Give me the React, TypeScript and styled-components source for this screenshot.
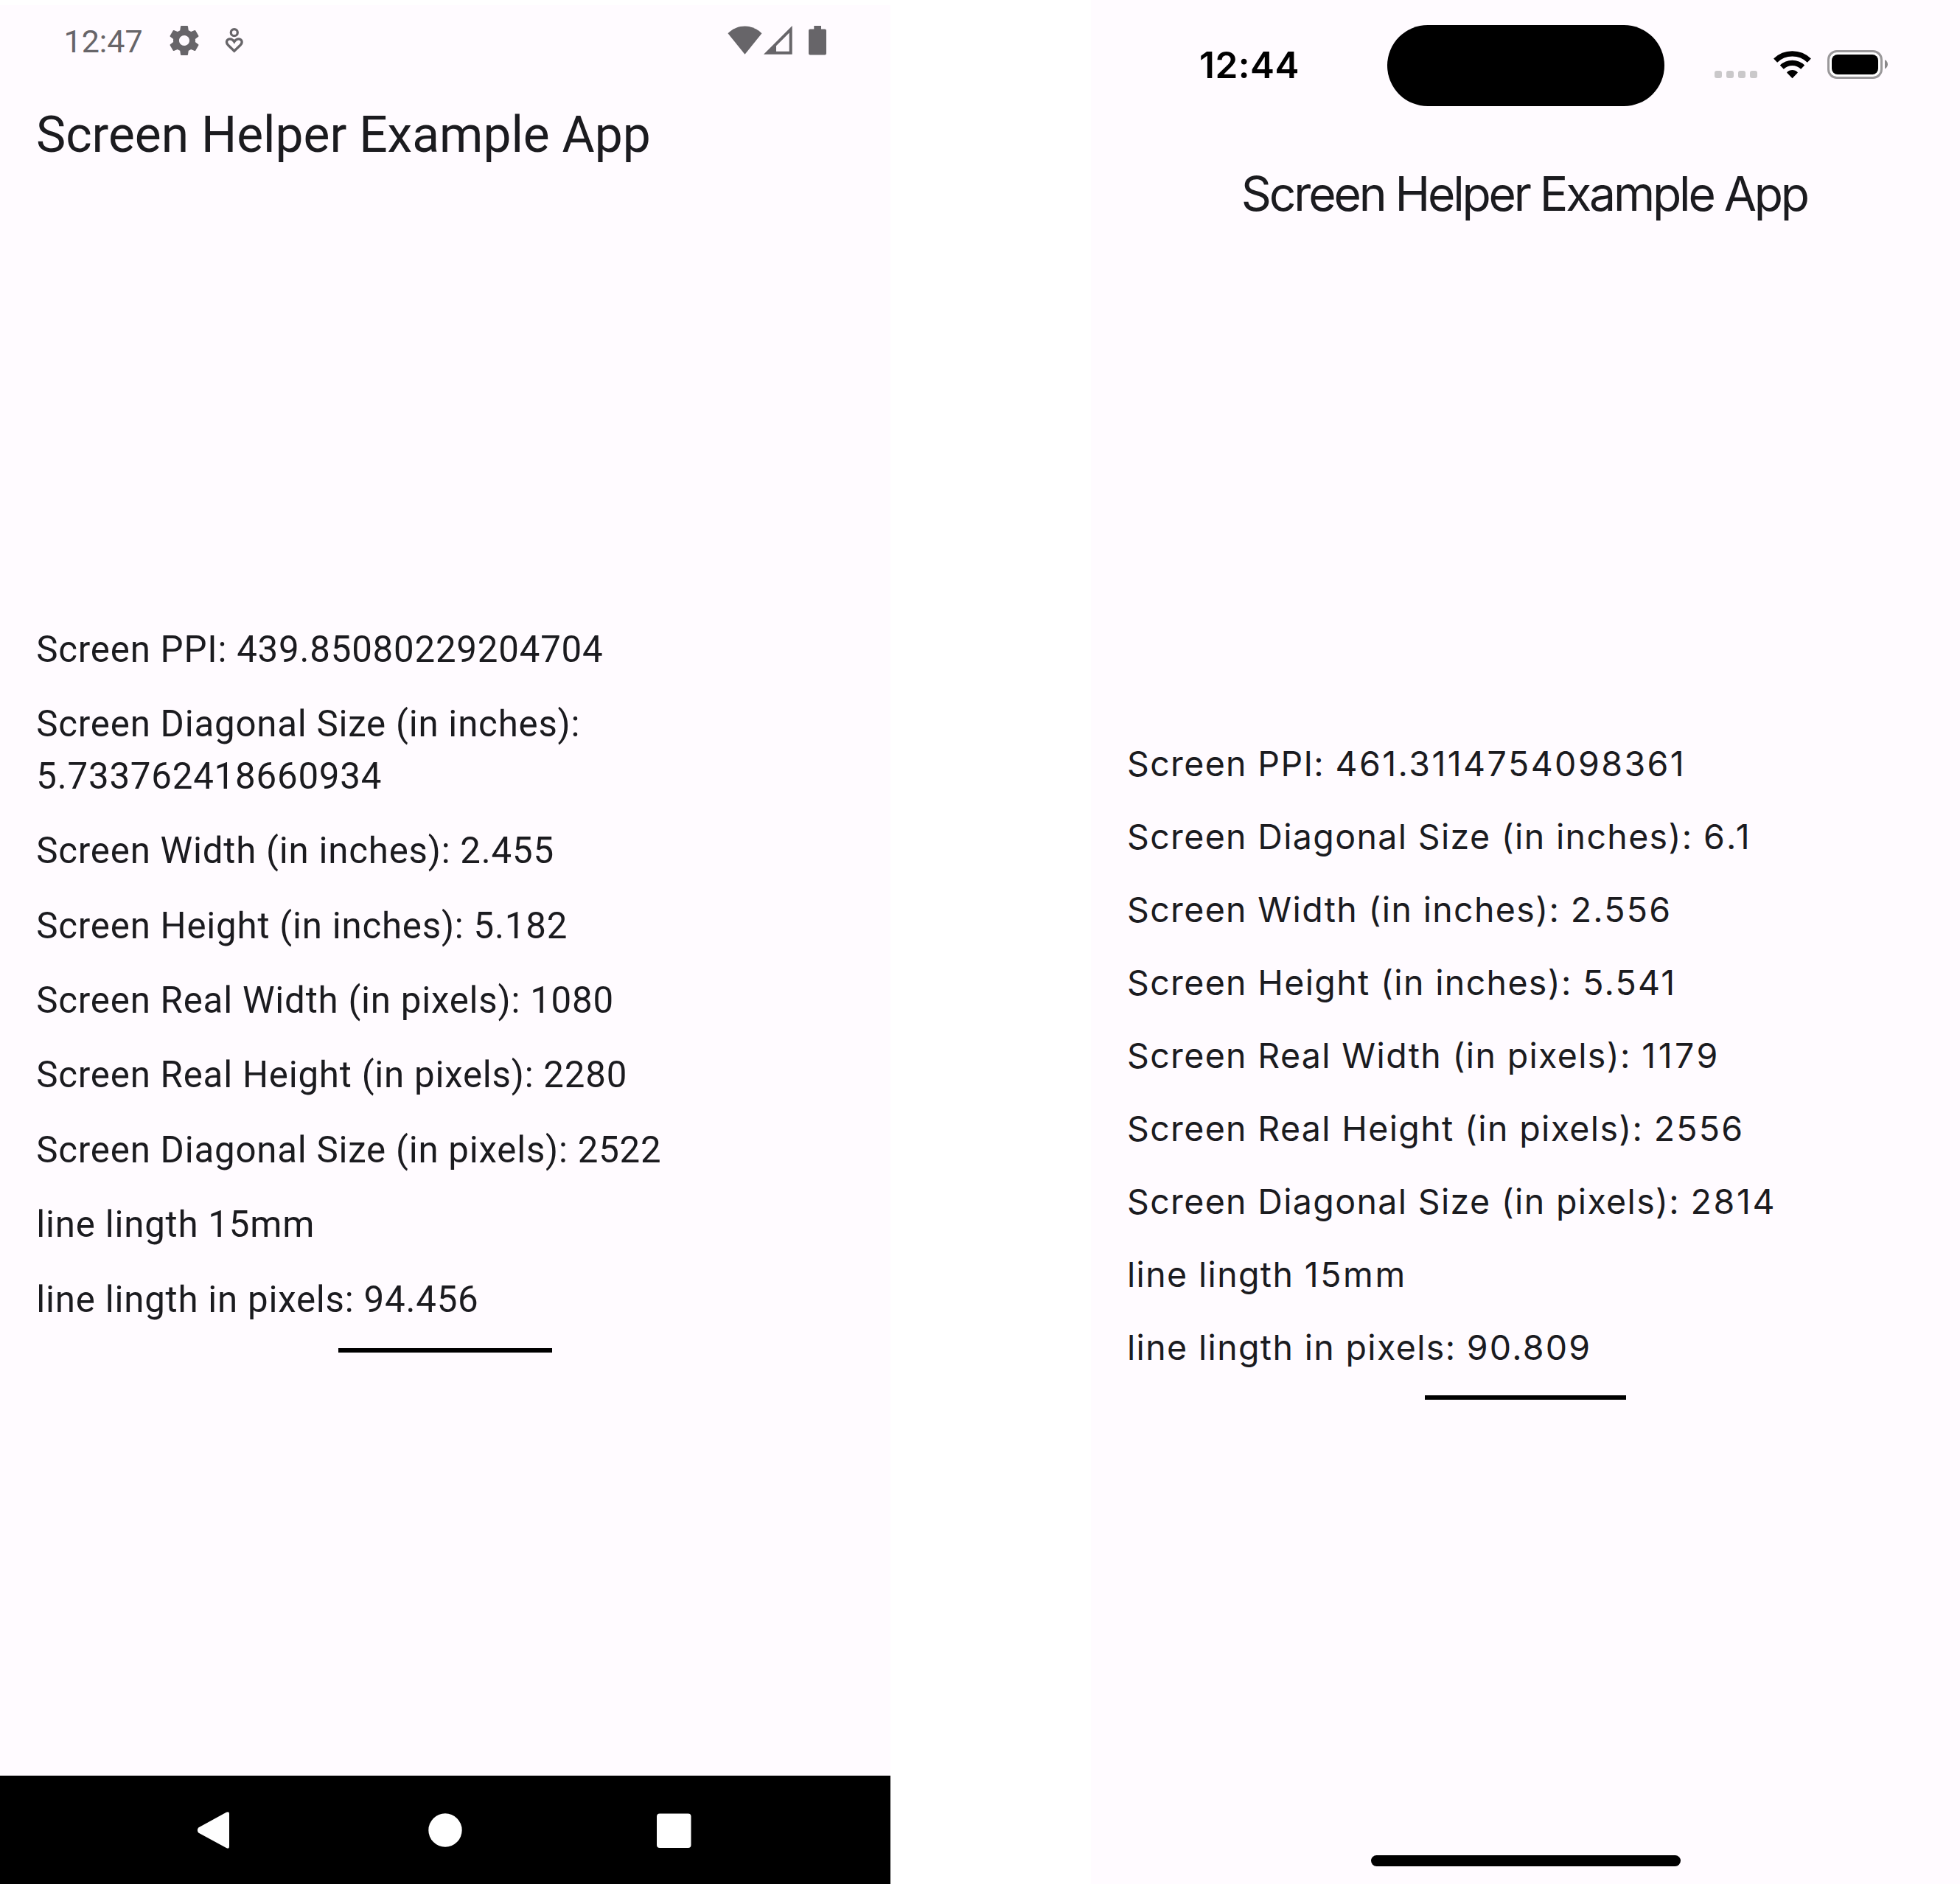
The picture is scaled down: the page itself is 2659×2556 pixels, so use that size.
import React from 'react';
import styled, { createGlobalStyle } from 'styled-components';

const GlobalStyle = createGlobalStyle`
  *, *::before, *::after { box-sizing: border-box; }
  body { margin: 0; background: #ffffff; }
  svg { display: block; }
`;

const ROBOTO = "Roboto, 'Liberation Sans', sans-serif";
const INTER = "Inter, 'Liberation Sans', sans-serif";

const Board = styled.main`
  display: grid;
  grid-template-columns: 1208px 1179px;
  column-gap: 272px;
  width: 2659px;
  height: 2556px;
  overflow: hidden;
  color: #1b1b1f;
`;

const AndroidScreen = styled.section`
  display: flex;
  flex-direction: column;
  margin-top: 7px;
  background: #fffbff;
  font-family: ${ROBOTO};
`;

const AndroidStatus = styled.header`
  display: flex;
  align-items: center;
  justify-content: space-between;
  height: 96px;
  padding: 0 87px 0 86.5px;
  color: #676569;
`;

const AndroidStatusGroup = styled.div`
  display: flex;
  align-items: center;
  height: 96px;
`;

const AndroidClock = styled.time`
  width: 139.5px;
  padding-top: 1px;
  font-size: 43px;
  line-height: 50px;
`;

const AndroidTitle = styled.h1`
  margin: 41px 0 0;
  padding-left: 49px;
  font-size: 67.7px;
  font-weight: 400;
  line-height: 78px;
  white-space: nowrap;
`;

const IosScreen = styled.section`
  display: flex;
  flex-direction: column;
  background: #fffbff;
  font-family: ${INTER};
`;

const IosStatus = styled.header`
  display: grid;
  grid-template-columns: 402px 375.5px 1fr;
  height: 177px;
  padding-top: 34px;
`;

const IosClock = styled.time`
  height: 110px;
  padding-left: 147px;
  color: #000;
  font-size: 49.5px;
  font-weight: 600;
  line-height: 108px;
  letter-spacing: 0.5px;
`;

const Island = styled.div`
  height: 110px;
  border-radius: 55px;
  background: #000;
`;

const IosIndicators = styled.div`
  display: flex;
  align-items: center;
  height: 107px;
  padding-left: 68.5px;
`;

const SignalDots = styled.div`
  display: flex;
  gap: 6px;
  margin: 27px 22px 0 0;
`;

const SignalDot = styled.i`
  width: 10px;
  height: 10px;
  border-radius: 3px;
  background: #cac8ca;
`;

const IosTitle = styled.h1`
  margin: 43.5px 0 0;
  padding-right: 3.2px;
  font-size: 64.2px;
  font-weight: 400;
  line-height: 84px;
  letter-spacing: -3.2px;
  word-spacing: -0.8px;
  text-align: center;
  white-space: nowrap;
`;

const Readings = styled.div<{ $top: number; $gap: number; $inset: number }>`
  display: flex;
  flex: 1;
  flex-direction: column;
  gap: ${(p) => p.$gap}px;
  padding: ${(p) => p.$top}px ${(p) => p.$inset}px 0;
`;

const AndroidReading = styled.p`
  margin: 0;
  font-size: 49.2px;
  line-height: 70.7px;
  letter-spacing: 0.8px;
`;

const IosReading = styled.p`
  margin: 0;
  font-size: 46.5px;
  line-height: 69px;
  letter-spacing: 1.35px;
  white-space: nowrap;
`;

const IosValue = styled.span<{ $tracking?: number }>`
  letter-spacing: ${(p) => p.$tracking ?? 2.2}px;
`;

const Ruler = styled.div<{ $length: number }>`
  align-self: center;
  width: ${(p) => p.$length}px;
  height: 6px;
  background: #000;
`;

const NavBar = styled.nav`
  display: grid;
  grid-template-columns: repeat(3, 50px);
  column-gap: 262px;
  align-items: center;
  height: 147px;
  padding-left: 265px;
  background: #000;
`;

const HomeArea = styled.footer`
  display: flex;
  justify-content: center;
  height: 42px;
`;

const HomeIndicator = styled.div`
  width: 420px;
  height: 15px;
  margin-top: 3px;
  border-radius: 8px;
  background: #000;
`;

const IconBox = styled.svg<{ $left?: number }>`
  flex: none;
  margin-left: ${(p) => p.$left ?? 0}px;
`;

const GearIcon = () => (
  <IconBox width="48" height="48" viewBox="0 0 24 24" fill="currentColor">
    <path d="M19.43 12.98c.04-.32.07-.64.07-.98s-.03-.66-.07-.98l2.11-1.65c.19-.15.24-.42.12-.64l-2-3.46c-.12-.22-.39-.3-.61-.22l-2.49 1c-.52-.4-1.08-.73-1.69-.98l-.38-2.65C14.46 2.18 14.25 2 14 2h-4c-.25 0-.46.18-.49.42l-.38 2.65c-.61.25-1.17.59-1.69.98l-2.49-1c-.23-.09-.49 0-.61.22l-2 3.46c-.13.22-.07.49.12.64l2.11 1.65c-.04.32-.07.65-.07.98s.03.66.07.98l-2.11 1.65c-.19.15-.24.42-.12.64l2 3.46c.12.22.39.3.61.22l2.49-1c.52.4 1.08.73 1.69.98l.38 2.65c.03.24.24.42.49.42h4c.25 0 .46-.18.49-.42l.38-2.65c.61-.25 1.17-.59 1.69-.98l2.49 1c.23.09.49 0 .61-.22l2-3.46c.12-.22.07-.49-.12-.64l-2.11-1.65zM12 15.5c-1.93 0-3.5-1.57-3.5-3.5s1.57-3.5 3.5-3.5 3.5 1.57 3.5 3.5-1.57 3.5-3.5 3.5z" />
  </IconBox>
);

const WellbeingIcon = () => (
  <IconBox $left={31} width="26" height="36" viewBox="0 0 26 36" fill="none" stroke="currentColor" strokeWidth="3.3">
    <circle cx="12.8" cy="7.2" r="4.5" />
    <path d="M12.8 32.2 L4.3 24 C0.6 20 3.2 15.9 6.8 15.9 C9.6 15.9 11.6 17.6 12.8 19.6 C14 17.6 16 15.9 18.8 15.9 C22.4 15.9 25 20 21.3 24Z" />
  </IconBox>
);

const AndroidWifi = () => (
  <IconBox width="47" height="40" viewBox="0 0 47 40" fill="currentColor">
    <path d="M0.5 10.2 C13.5 -2.8 33.5 -2.8 46.5 10.2 L23.5 38.7Z" />
  </IconBox>
);

const AndroidCell = () => (
  <IconBox $left={2.5} width="39" height="40" viewBox="0 0 39 40" fill="currentColor" fillRule="evenodd">
    <path d="M0 38.7 L38.7 0 V38.7Z M17 27.3 V34.8 H34.7 V9.6Z" />
  </IconBox>
);

const AndroidBattery = () => (
  <IconBox $left={22} width="24" height="40" viewBox="0 0 24 40" fill="currentColor">
    <path d="M7.3 0 H17 V4.4 H22 Q24 4.4 24 6.4 V37.5 Q24 39.5 22 39.5 H2 Q0 39.5 0 37.5 V6.4 Q0 4.4 2 4.4 H7.3Z" />
  </IconBox>
);

const IosWifi = () => (
  <IconBox width="51" height="38" viewBox="0 0 51 38" fill="none" stroke="#000">
    <path d="M2.6 13.1 A33 33 0 0 1 48.4 13.1" strokeWidth="7.2" />
    <path d="M11.3 22.2 A20.4 20.4 0 0 1 39.7 22.2" strokeWidth="7.2" />
    <path d="M18 29.4 C22 25 29 25 33 29.4 L25.5 37.3Z" fill="#000" stroke="none" />
  </IconBox>
);

const IosBattery = () => (
  <IconBox $left={22} width="83" height="39" viewBox="0 0 83 39">
    <rect x="1.5" y="1.5" width="72" height="36" rx="11.5" fill="#fff" stroke="#9a989a" strokeWidth="3" />
    <rect x="6" y="6" width="63" height="27" rx="8" fill="#000" />
    <path d="M78 13 Q82 15.5 82 19.3 Q82 23 78 25.5Z" fill="#8a888a" />
  </IconBox>
);

const androidReadings = [
  'Screen PPI: 439.85080229204704',
  'Screen Diagonal Size (in inches): 5.733762418660934',
  'Screen Width (in inches): 2.455',
  'Screen Height (in inches): 5.182',
  'Screen Real Width (in pixels): 1080',
  'Screen Real Height (in pixels): 2280',
  'Screen Diagonal Size (in pixels): 2522',
  'line lingth 15mm',
  'line lingth in pixels: 94.456',
];

interface IosRow {
  label: string;
  value: string;
  tracking?: number;
}

const iosReadings: IosRow[] = [
  { label: 'Screen PPI:', value: '461.3114754098361', tracking: 2.45 },
  { label: 'Screen Diagonal Size (in inches):', value: '6.1', tracking: 3.6 },
  { label: 'Screen Width (in inches):', value: '2.556' },
  { label: 'Screen Height (in inches):', value: '5.541' },
  { label: 'Screen Real Width (in pixels):', value: '1179', tracking: 3.5 },
  { label: 'Screen Real Height (in pixels):', value: '2556' },
  { label: 'Screen Diagonal Size (in pixels):', value: '2814', tracking: 2.6 },
  { label: 'line lingth', value: '15mm', tracking: 2.6 },
  { label: 'line lingth in pixels:', value: '90.809' },
];

export default function App() {
  return (
    <>
      <GlobalStyle />
      <Board>
        <AndroidScreen>
          <AndroidStatus>
            <AndroidStatusGroup>
              <AndroidClock>12:47</AndroidClock>
              <GearIcon />
              <WellbeingIcon />
            </AndroidStatusGroup>
            <AndroidStatusGroup>
              <AndroidWifi />
              <AndroidCell />
              <AndroidBattery />
            </AndroidStatusGroup>
          </AndroidStatus>
          <AndroidTitle>Screen Helper Example App</AndroidTitle>
          <Readings $top={623.5} $gap={30.76} $inset={49.3}>
            {androidReadings.map((text) => (
              <AndroidReading key={text}>{text}</AndroidReading>
            ))}
            <Ruler $length={290.5} />
          </Readings>
          <NavBar>
            <svg width="50" height="52" viewBox="0 0 50 52" fill="#fff">
              <path d="M4.2 22.5 L42 1.8 Q46 -0.2 46 4 V48 Q46 52.2 42 50 L4.2 29.5 Q1.5 26 4.2 22.5Z" />
            </svg>
            <svg width="50" height="50" viewBox="0 0 50 50" fill="#fff">
              <circle cx="27" cy="25" r="22.7" />
            </svg>
            <svg width="50" height="50" viewBox="0 0 50 50" fill="#fff">
              <rect x="2" y="2.5" width="46.5" height="46.5" rx="4" />
            </svg>
          </NavBar>
        </AndroidScreen>
        <IosScreen>
          <IosStatus>
            <IosClock>12:44</IosClock>
            <Island />
            <IosIndicators>
              <SignalDots>
                <SignalDot />
                <SignalDot />
                <SignalDot />
                <SignalDot />
              </SignalDots>
              <IosWifi />
              <IosBattery />
            </IosIndicators>
          </IosStatus>
          <IosTitle>Screen Helper Example App</IosTitle>
          <Readings $top={697.5} $gap={30} $inset={49}>
            {iosReadings.map(({ label, value, tracking }) => (
              <IosReading key={label}>
                {label} <IosValue $tracking={tracking}>{value}</IosValue>
              </IosReading>
            ))}
            <Ruler $length={272.4} />
          </Readings>
          <HomeArea>
            <HomeIndicator />
          </HomeArea>
        </IosScreen>
      </Board>
    </>
  );
}
